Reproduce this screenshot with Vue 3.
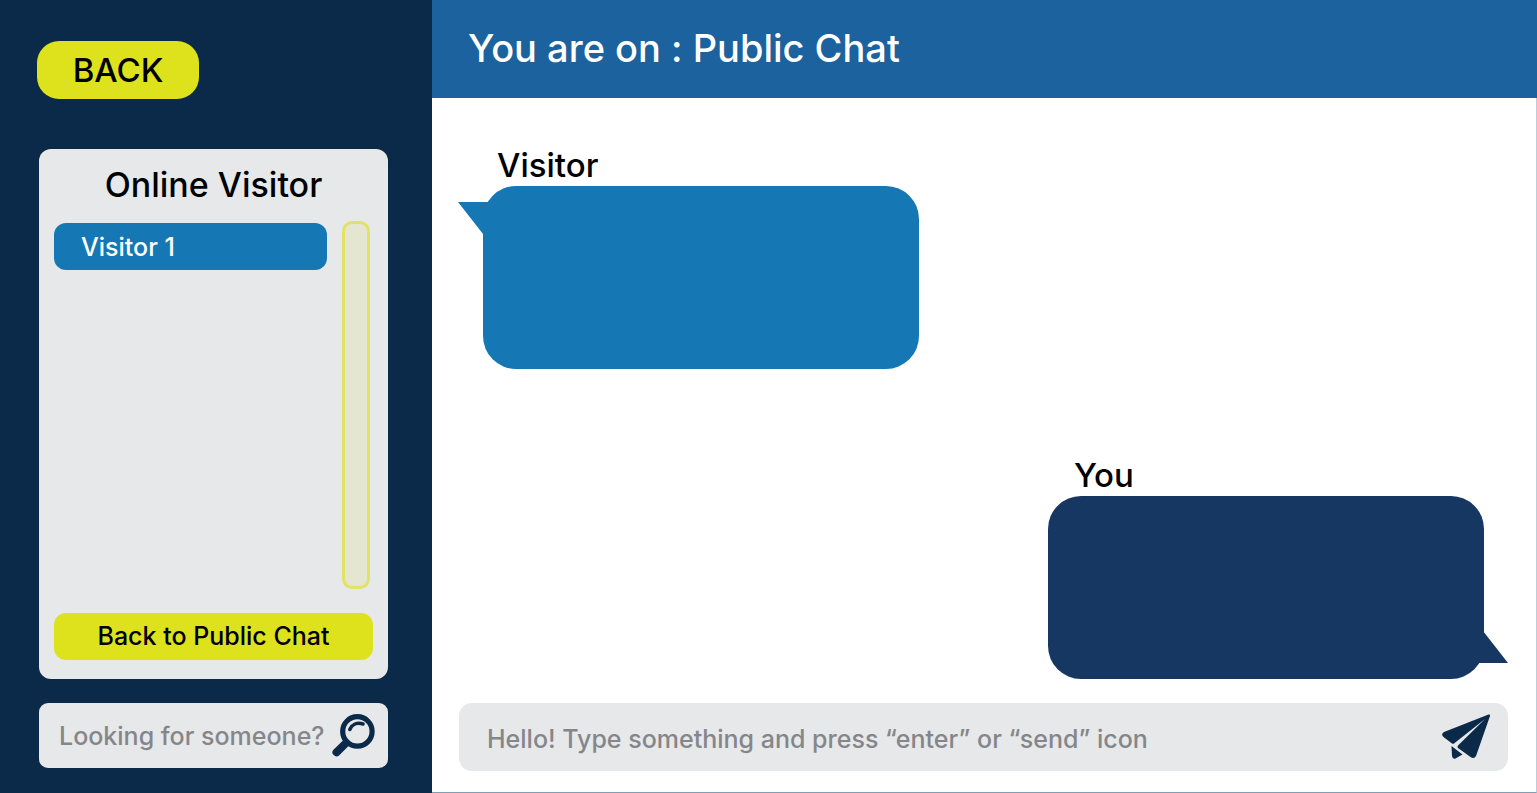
<script setup>
import { ref } from 'vue'

const visitors = ref(['Visitor 1'])
const search = ref('')
const draft = ref('')
</script>

<template>
  <div class="app">
    <aside class="sidebar">
      <button class="back" type="button">BACK</button>

      <section class="panel">
        <h2>Online Visitor</h2>
        <div class="roster">
          <ul>
            <li v-for="name in visitors" :key="name">
              <button class="visitor" type="button">{{ name }}</button>
            </li>
          </ul>
          <div class="track"></div>
        </div>
        <button class="public" type="button">Back to Public Chat</button>
      </section>

      <form class="search" @submit.prevent>
        <input v-model="search" type="text" aria-label="Looking for someone?" placeholder="Looking for someone?" />
        <button type="submit" aria-label="Search">
          <svg width="44" height="44" viewBox="0 0 44 44" fill="none" stroke="#0b2a49" stroke-linecap="round">
            <circle cx="25.4" cy="17.4" r="14.7" stroke-width="5.2" />
            <path d="M17.800 15.400C20 10.500 25 8.200 31 10" stroke-width="3.600" />
            <path d="M14 29L4.500 38.300" stroke-width="8" />
          </svg>
        </button>
      </form>
    </aside>

    <main class="chat">
      <header><h1>You are on : Public Chat</h1></header>
      <div class="messages">
        <article class="message theirs">
          <h3>Visitor</h3>
          <div class="bubble">
            <svg class="tail" width="34" height="32" viewBox="0 0 34 32"><path d="M0 0H34V32H25Z" fill="#1578b5" /></svg>
          </div>
        </article>
        <article class="message mine">
          <h3>You</h3>
          <div class="bubble">
            <svg class="tail" width="34" height="32" viewBox="0 0 34 32"><path d="M34 32H4L0 0H9Z" fill="#173763" /></svg>
          </div>
        </article>
      </div>
      <form class="composer" @submit.prevent>
        <input v-model="draft" type="text" aria-label="Message" placeholder="Hello! Type something and press “enter” or “send” icon" />
        <button type="submit" aria-label="Send">
          <svg width="50" height="46" viewBox="0 0 50 46" fill="#0b2a49">
            <path d="M47.500 0.500Q49.500 0 49 2L35 42Q33 45.500 29.500 43L17 34Q16 33 17 31.500L44 5L13 29.500Q12 30.200 11 29.500L2.500 23Q-0.500 20 3 18Z" />
            <path d="M10.500 32L21.500 40.500L14.500 44.500Q11.500 45.500 11 42Z" />
          </svg>
        </button>
      </form>
    </main>
  </div>
</template>

<style>
body {
  margin: 0;
}
</style>

<style scoped>
.app {
  box-sizing: border-box;
  display: grid;
  grid-template-columns: 432px 1fr;
  min-height: 100vh;
  background: #fff;
  color: #000;
  font-family: Inter, "Liberation Sans", sans-serif;
  font-weight: 500;
  font-feature-settings: "calt" 0;
}

h1,
h2,
h3,
ul {
  margin: 0;
  padding: 0;
  font-weight: 500;
}

ul {
  list-style: none;
}

button,
input {
  box-sizing: border-box;
  margin: 0;
  padding: 0;
  border: 0;
  font: inherit;
  color: inherit;
}

button {
  background: none;
  cursor: pointer;
}

svg {
  display: block;
}

.sidebar {
  box-sizing: border-box;
  display: flex;
  flex-direction: column;
  padding: 41px 44px 25px 39px;
  background: #0b2a49;
}

.back {
  align-self: flex-start;
  width: 162px;
  height: 58px;
  margin-left: -2px;
  border-radius: 22px;
  background: #dde21d;
  font-size: 33px;
}

.panel {
  flex: 1;
  display: flex;
  flex-direction: column;
  margin: 50px 0 24px;
  padding: 16px 15px 19px;
  border-radius: 12px;
  background: #e6e8ea;
}

.panel h2 {
  font-size: 34px;
  line-height: 40px;
  text-align: center;
}

.roster {
  flex: 1;
  display: flex;
  gap: 15px;
  margin: 16px 3px 24px 0;
}

.roster ul {
  flex: 1;
  padding-top: 2px;
}

.visitor {
  width: 100%;
  height: 47px;
  padding: 0 27px;
  border-radius: 12px;
  background: #1578b5;
  color: #fff;
  font-size: 25px;
  text-align: left;
}

.track {
  box-sizing: border-box;
  width: 28px;
  border: 3px solid #e1e463;
  border-radius: 10px;
  background: #e5e6d1;
}

.public {
  height: 47px;
  padding-bottom: 2px;
  border-radius: 12px;
  background: #dde21d;
  font-size: 25px;
}

.search,
.composer {
  display: flex;
  align-items: center;
  background: #e6e8ea;
}

.search {
  height: 65px;
  padding: 0 12px 0 20px;
  border-radius: 9px;
}

.search input,
.composer input {
  flex: 1;
  min-width: 0;
  height: 48px;
  outline: 0;
  background: none;
  font-size: 25px;
}

input::placeholder {
  color: #858689;
  opacity: 1;
}

.chat {
  display: flex;
  flex-direction: column;
  border-right: 1px solid #b9cfdc;
  border-bottom: 1px solid #7f9fb5;
}

.chat header {
  box-sizing: border-box;
  height: 98px;
  margin-right: -1px;
  padding: 25px 36px;
  background: #1b629e;
  color: #fff;
}

.chat h1 {
  font-size: 38px;
  line-height: 46px;
}

.messages {
  flex: 1;
  display: flex;
  flex-direction: column;
  justify-content: space-between;
  padding: 46px 52px 24px 51px;
}

.message {
  width: 436px;
  max-width: 100%;
}

.mine {
  align-self: flex-end;
}

.message h3 {
  padding-left: 14px;
  font-size: 33px;
  line-height: 42px;
}

.mine h3 {
  padding-left: 26px;
}

.bubble {
  position: relative;
  min-height: 183px;
  border-radius: 33px;
  background: #1578b5;
}

.mine .bubble {
  background: #173763;
}

.tail {
  position: absolute;
  top: 16px;
  left: -25px;
}

.mine .tail {
  top: auto;
  right: -24px;
  bottom: 16px;
  left: auto;
}

.composer {
  height: 68px;
  margin: 0 28px 21px 27px;
  padding: 0 17px 0 28px;
  border-radius: 13px;
}

.composer input {
  margin-top: 4px;
}
</style>
